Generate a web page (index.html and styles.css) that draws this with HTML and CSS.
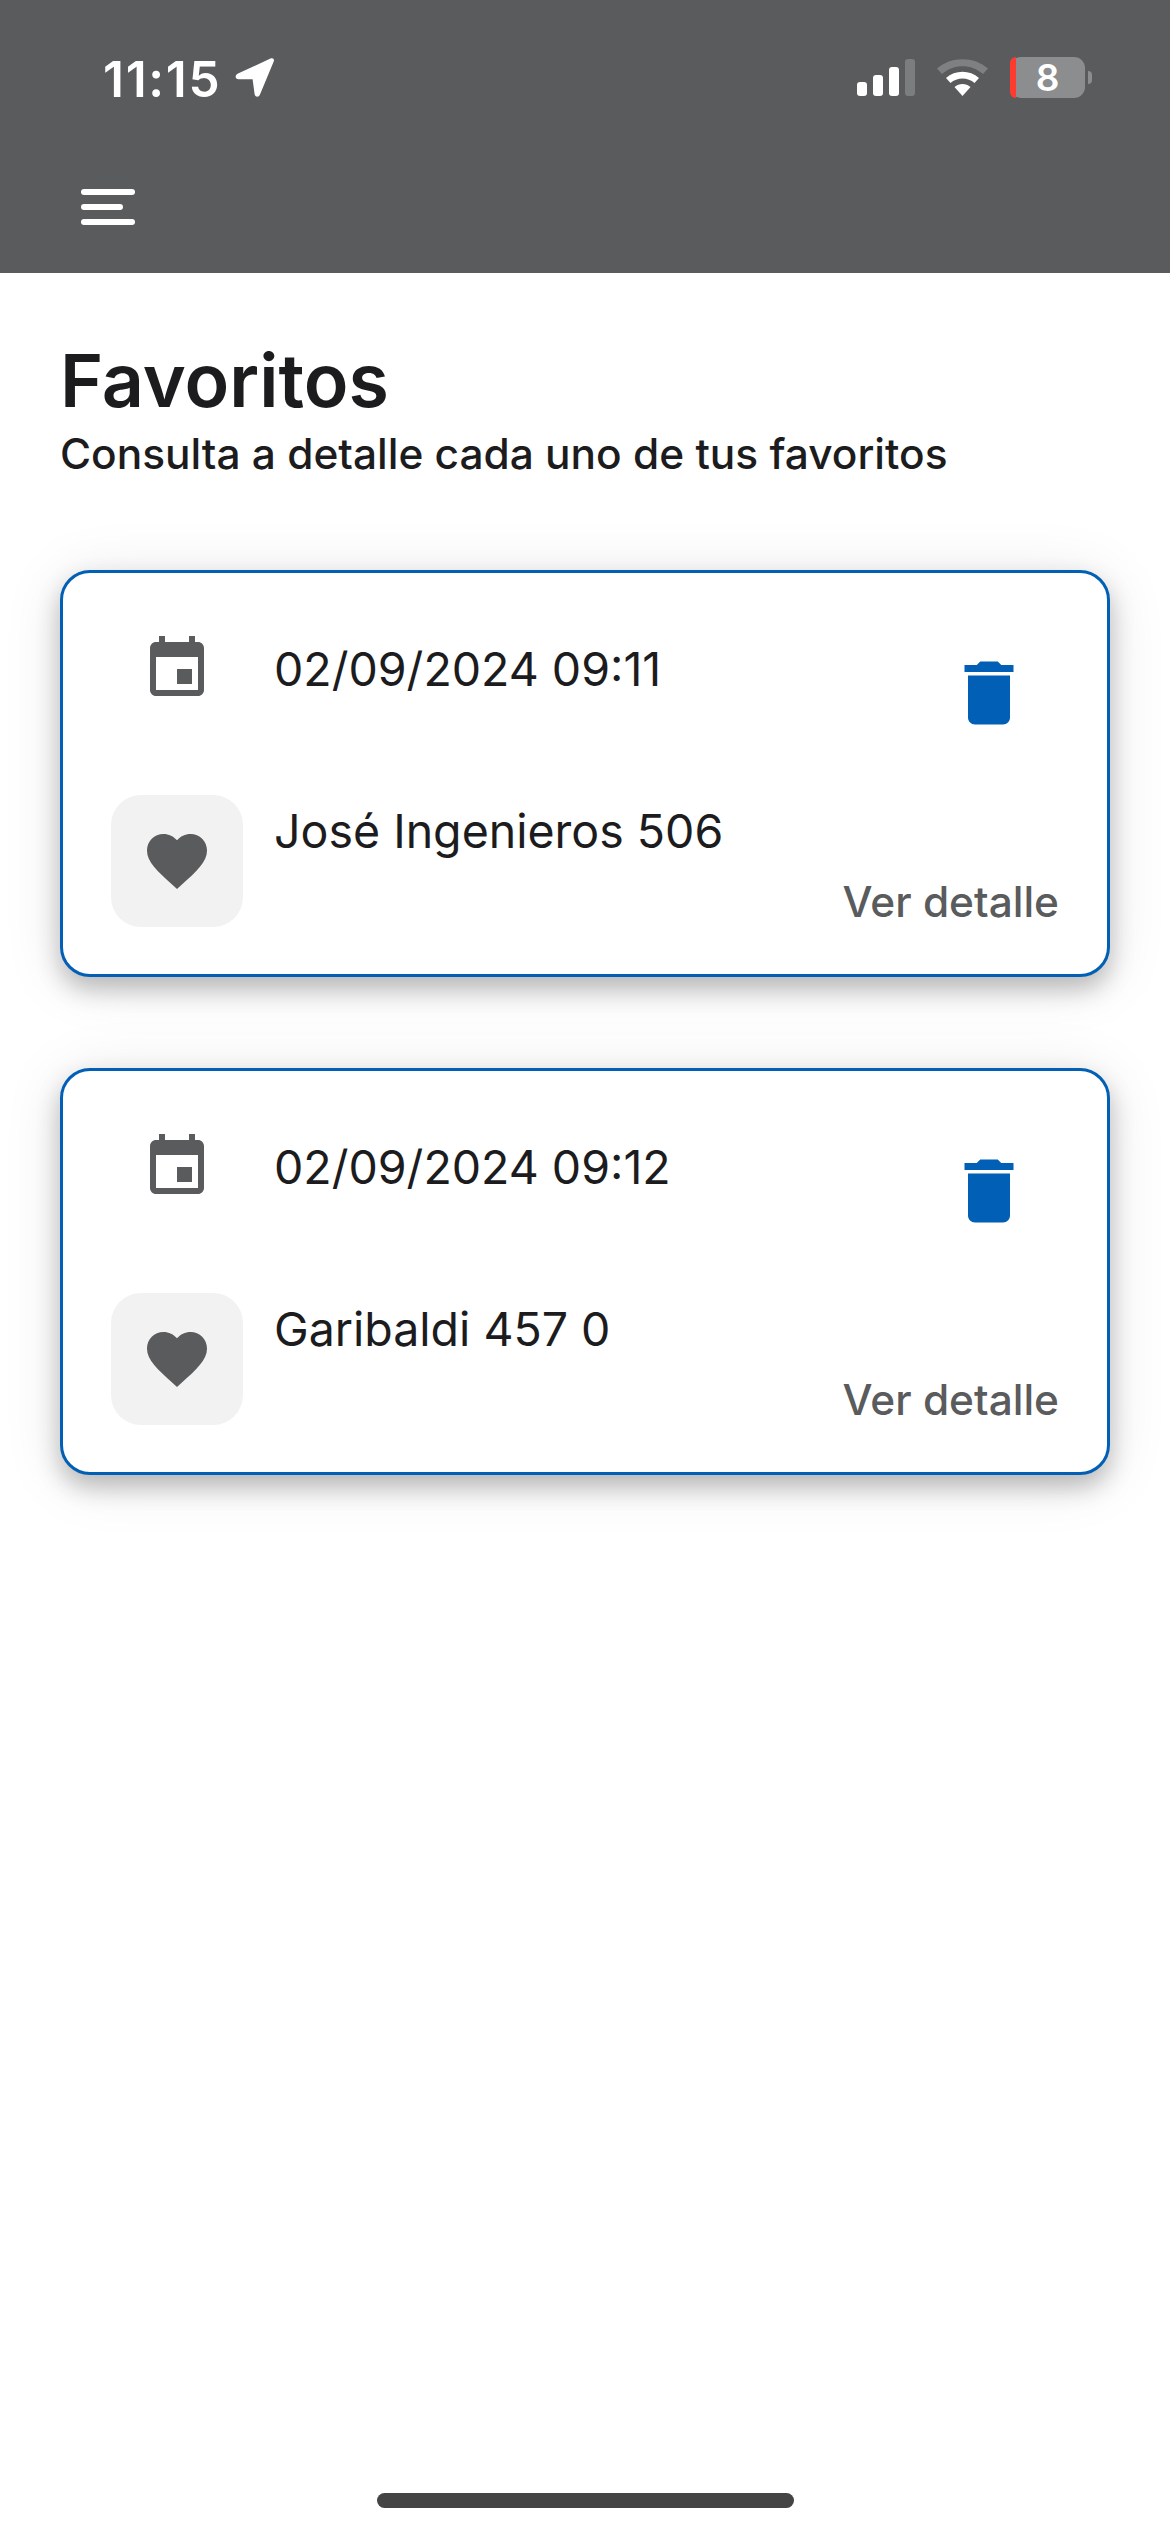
FILE: index.html
```html
<!DOCTYPE html>
<html>
<head>
    <title>Favoritos</title>
    <link rel="stylesheet" href="styles.css">
</head>
<body>
    <div class="page">
        <div class="header">
            <div class="status">
                <div class="time">
                    <span>11:15</span>
                    <svg class="arrow" width="39" height="39" viewBox="0 0 39 39"><path d="M36 0.3 3 15.6C-0.6 17.3 0.2 21.2 3.6 21.2L17.6 21.3 19.6 36.3C20.2 39.4 23.6 39.7 25 36.6L38.7 3.6C39.6 1.2 38.2-0.4 36 0.3Z" fill="#fff"/></svg>
                </div>
                <div class="indicators">
                    <div class="signal">
                        <span class="bar bar1"></span>
                        <span class="bar bar2"></span>
                        <span class="bar bar3"></span>
                        <span class="bar bar4"></span>
                    </div>
                    <svg class="wifi" width="51" height="37" viewBox="0 0 51 37">
                        <path d="M0 9.5C14-3 37-3 51 9.5L46 15C34.500 4.500 16.500 4.500 5 15Z" fill="#7f8082"/>
                        <path d="M9 19C18 10.500 33 10.500 42 19L37.500 24C31 18 20 18 13.500 24Z" fill="#fff"/>
                        <path d="M17.500 28C22 24 29 24 33.500 28L25.500 37Z" fill="#fff"/>
                    </svg>
                    <div class="battery">
                        <div class="batteryBody">
                            <span class="batteryLow"></span>
                            <span class="batteryNum">8</span>
                        </div>
                        <span class="batteryNub"></span>
                    </div>
                </div>
            </div>
            <div class="menu">
                <span class="menuLine"></span>
                <span class="menuLine short"></span>
                <span class="menuLine"></span>
            </div>
        </div>

        <div class="content">
            <h1>Favoritos</h1>
            <p class="subtitle">Consulta a detalle cada uno de tus favoritos</p>

            <div class="card">
                <div class="cardTop">
                    <div class="iconCol">
                        <svg class="icon" width="72" height="72" viewBox="0 0 24 24"><path d="M17 12h-5v5h5v-5zM16 1v2H8V1H6v2H5c-1.110 0-1.990.9-1.990 2L3 19c0 1.100.89 2 2 2h14c1.100 0 2-.9 2-2V5c0-1.100-.9-2-2-2h-1V1h-2zm3 18H5V8h14v11z"/></svg>
                    </div>
                    <p class="cardText">02/09/2024 09:11</p>
                    <svg class="trash" width="84" height="84" viewBox="0 0 24 24"><path d="M6 19c0 1.100.9 2 2 2h8c1.100 0 2-.9 2-2V7H6v12zM19 4h-3.500l-1-1h-5l-1 1H5v2h14V4z"/></svg>
                </div>
                <div class="cardBottom">
                    <div class="iconBox">
                        <svg class="icon" width="72" height="72" viewBox="0 0 24 24"><path d="M12 21.350l-1.450-1.320C5.400 15.360 2 12.280 2 8.500 2 5.420 4.420 3 7.500 3c1.740 0 3.410.81 4.500 2.090C13.090 3.810 14.760 3 16.500 3 19.580 3 22 5.420 22 8.500c0 3.780-3.400 6.860-8.550 11.540L12 21.350z"/></svg>
                    </div>
                    <div class="cardInfo">
                        <p class="cardText">José Ingenieros 506</p>
                        <a class="detail">Ver detalle</a>
                    </div>
                </div>
            </div>

            <div class="card">
                <div class="cardTop">
                    <div class="iconCol">
                        <svg class="icon" width="72" height="72" viewBox="0 0 24 24"><path d="M17 12h-5v5h5v-5zM16 1v2H8V1H6v2H5c-1.110 0-1.990.9-1.990 2L3 19c0 1.100.89 2 2 2h14c1.100 0 2-.9 2-2V5c0-1.100-.9-2-2-2h-1V1h-2zm3 18H5V8h14v11z"/></svg>
                    </div>
                    <p class="cardText">02/09/2024 09:12</p>
                    <svg class="trash" width="84" height="84" viewBox="0 0 24 24"><path d="M6 19c0 1.100.9 2 2 2h8c1.100 0 2-.9 2-2V7H6v12zM19 4h-3.500l-1-1h-5l-1 1H5v2h14V4z"/></svg>
                </div>
                <div class="cardBottom">
                    <div class="iconBox">
                        <svg class="icon" width="72" height="72" viewBox="0 0 24 24"><path d="M12 21.350l-1.450-1.320C5.400 15.360 2 12.280 2 8.500 2 5.420 4.420 3 7.500 3c1.740 0 3.410.81 4.500 2.090C13.090 3.810 14.760 3 16.500 3 19.580 3 22 5.420 22 8.500c0 3.780-3.400 6.860-8.550 11.540L12 21.350z"/></svg>
                    </div>
                    <div class="cardInfo">
                        <p class="cardText">Garibaldi 457 0</p>
                        <a class="detail">Ver detalle</a>
                    </div>
                </div>
            </div>
        </div>

        <div class="homeBar"></div>
    </div>
</body>
</html>
```

FILE: styles.css
```css
html, body{
    margin: 0;
    padding: 0;
    background-color: #ffffff;
    font-family: Inter, "Liberation Sans", sans-serif;
}
p, h1{
    margin: 0;
}
.page{
    display: flex;
    flex-direction: column;
    height: 2532px;
    overflow: hidden;
}
.header{
    height: 273px;
    flex: none;
    background-color: #5a5b5d;
    display: flex;
    flex-direction: column;
}
.status{
    display: flex;
    justify-content: space-between;
    align-items: flex-start;
    padding: 57px 78px 0 103px;
    height: 41px;
}
.time{
    display: flex;
    align-items: center;
    gap: 14px;
    height: 41px;
    color: #ffffff;
    font-size: 49.500px;
    line-height: 41px;
    font-weight: 600;
    letter-spacing: 1.700px;
}
.time span{
    padding-top: 3px;
}
.indicators{
    display: flex;
    align-items: flex-end;
    gap: 22px;
}
.signal{
    display: flex;
    align-items: flex-end;
    gap: 6px;
    height: 37px;
    margin-bottom: 2px;
}
.bar{
    width: 10px;
    border-radius: 3px;
    background-color: #ffffff;
}
.bar1{ height: 14px; }
.bar2{ height: 21px; }
.bar3{ height: 29px; }
.bar4{ height: 37px; background-color: #7c7d7f; }
.wifi{
    margin-bottom: 2px;
}
.battery{
    display: flex;
    align-items: center;
    gap: 3px;
}
.batteryBody{
    position: relative;
    width: 75px;
    height: 41px;
    border-radius: 11px;
    background-color: #8c8d8f;
    display: flex;
    align-items: center;
    justify-content: center;
}
.batteryLow{
    position: absolute;
    left: 0;
    top: 0;
    bottom: 0;
    width: 6px;
    border-radius: 11px 0 0 11px;
    background-color: #ff3b30;
}
.batteryNum{
    color: #ffffff;
    font-size: 37px;
    line-height: 40px;
    font-weight: 600;
}
.batteryNub{
    width: 4px;
    height: 13px;
    border-radius: 0 4px 4px 0;
    background-color: #8c8d8f;
}
.menu{
    display: flex;
    flex-direction: column;
    gap: 9px;
    width: 54px;
    margin: 91px 0 0 81px;
}
.menuLine{
    height: 6px;
    border-radius: 3px;
    background-color: #ffffff;
}
.short{
    width: 42px;
}
.content{
    flex: 1;
    padding: 0 60px;
}
h1{
    margin-top: 63px;
    font-size: 73.500px;
    line-height: 90px;
    font-weight: 600;
    color: #1c1c1e;
}
.subtitle{
    margin-top: 3px;
    font-size: 42.400px;
    line-height: 50px;
    font-weight: 500;
    color: #1c1c1e;
}
.card{
    height: 401px;
    margin-top: 91px;
    border: 3px solid #015fb5;
    border-radius: 30px;
    background-color: #ffffff;
    box-shadow: 0 12px 24px rgba(0, 0, 0, 0.24), 0 6px 60px rgba(0, 0, 0, 0.1);
    padding: 0 48px;
    display: flex;
    flex-direction: column;
}
.cardTop{
    display: flex;
    height: 222px;
    align-items: flex-start;
}
.iconCol{
    width: 132px;
    display: flex;
    justify-content: center;
    padding-top: 60px;
}
.icon{
    fill: #5a5b5d;
}
.cardText{
    font-size: 46.500px;
    line-height: 56px;
    color: #1c1c1e;
    margin-left: 31px;
    padding-top: 68px;
}
.trash{
    fill: #015fb5;
    margin-left: auto;
    margin-top: 78px;
    margin-right: 28px;
}
.cardBottom{
    display: flex;
    align-items: flex-start;
}
.iconBox{
    width: 132px;
    height: 132px;
    flex: none;
    border-radius: 30px;
    background-color: #f2f2f2;
    display: flex;
    align-items: center;
    justify-content: center;
}
.cardInfo{
    flex: 1;
    display: flex;
    flex-direction: column;
}
.cardInfo .cardText{
    padding-top: 8px;
}
.detail{
    align-self: flex-end;
    font-size: 42.400px;
    line-height: 50px;
    font-weight: 500;
    color: #5a5b5d;
    margin-top: 18px;
}
.homeBar{
    flex: none;
    align-self: center;
    width: 417px;
    height: 15px;
    border-radius: 8px;
    background-color: #444444;
    margin-bottom: 24px;
}
```
